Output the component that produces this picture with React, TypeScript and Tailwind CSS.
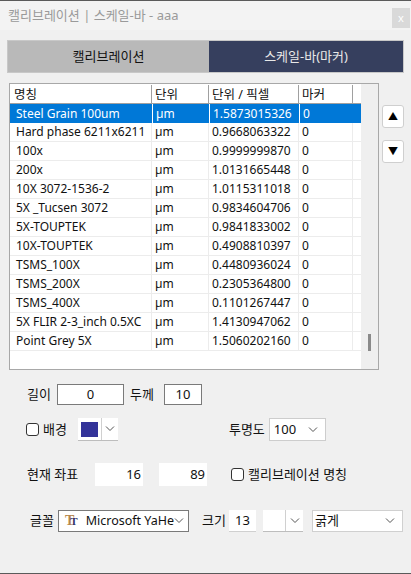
import React from 'react';

const rows = [
  ['Steel Grain 100um', 'µm', '1.5873015326', '0'],
  ['Hard phase 6211x6211', 'µm', '0.9668063322', '0'],
  ['100x', 'µm', '0.9999999870', '0'],
  ['200x', 'µm', '1.0131665448', '0'],
  ['10X 3072-1536-2', 'µm', '1.0115311018', '0'],
  ['5X _Tucsen 3072', 'µm', '0.9834604706', '0'],
  ['5X-TOUPTEK', 'µm', '0.9841833002', '0'],
  ['10X-TOUPTEK', 'µm', '0.4908810397', '0'],
  ['TSMS_100X', 'µm', '0.4480936024', '0'],
  ['TSMS_200X', 'µm', '0.2305364800', '0'],
  ['TSMS_400X', 'µm', '0.1101267447', '0'],
  ['5X FLIR 2-3_inch 0.5XC', 'µm', '1.4130947062', '0'],
  ['Point Grey 5X', 'µm', '1.5060202160', '0'],
];

const Chevron = () => (
  <svg width="10" height="6" viewBox="0 0 10 6" fill="none" stroke="#555" strokeWidth="1">
    <path d="M1 0.5 L5 4.5 L9 0.5" />
  </svg>
);

const CheckBox = () => (
  <span className="w-[13px] h-[13px] rounded-[3px] border border-[#333] bg-white inline-block" />
);

export default function App() {
  return (
    <div
      className="w-[411px] h-[574px] bg-[#f0f0f0] border-t border-b border-[#5a5a5a] flex flex-col text-[12px] text-[#111]"
      style={{ fontFamily: '"Noto Sans", "Noto Sans CJK KR", sans-serif' }}
    >
      {/* title bar */}
      <div className="h-[29px] bg-[#f3f3f3] flex items-start">
        <div className="pl-[8px] pt-[5px] text-[13px] text-[#9a9a9a]">캘리브레이션 | 스케일-바 - aaa</div>
        <div className="ml-auto mt-[7px] mr-[1px] w-[18px] h-[20px] bg-[#d9d9d9] flex items-center justify-center text-[11px] text-white">
          x
        </div>
      </div>

      {/* tabs */}
      <div className="mt-[10px] mx-[7px] h-[33px] flex border border-[#c8c8c8] text-[13px]">
        <div className="w-[201px] bg-[#b9b9b9] flex items-center justify-center text-[#111]">캘리브레이션</div>
        <div className="flex-1 bg-[#363f5e] flex items-center justify-center text-[#e8e8e8]">스케일-바(마커)</div>
      </div>

      {/* table + arrows */}
      <div className="mt-[10px] flex">
        <div className="ml-[9px] w-[370px] h-[287px] border border-[#a8a8a8] bg-white flex">
          <div className="w-[351px] pt-[1px]">
            <div className="grid grid-cols-[142px_57px_90px_54px] h-[19px] border-b border-[#a0a0a0] text-[12.5px]">
              <div className="pl-[4px] border-r border-[#a0a0a0] leading-[19px]">명칭</div>
              <div className="pl-[3px] border-r border-[#a0a0a0] leading-[19px]">단위</div>
              <div className="pl-[3px] border-r border-[#a0a0a0] leading-[19px]">단위 / 픽셀</div>
              <div className="pl-[3px] border-r border-[#a0a0a0] leading-[19px]">마커</div>
            </div>
            {rows.map((r, i) => {
              const sel = i === 0;
              return (
                <div
                  key={i}
                  className={
                    sel
                      ? 'grid grid-cols-[142px_57px_90px_54px] h-[19px] bg-[#0078d7] text-white'
                      : 'grid grid-cols-[142px_57px_90px_54px] h-[19px] border-b border-[#ececec]'
                  }
                >
                  <div className={sel ? 'pl-[6px] leading-[19px] whitespace-nowrap' : 'pl-[6px] leading-[18px] border-r border-[#ececec] whitespace-nowrap'}>{r[0]}</div>
                  <div className={sel ? 'pl-[3px] leading-[19px] border-l border-white' : 'pl-[3px] leading-[18px] border-r border-[#ececec]'}>{r[1]}</div>
                  <div className={sel ? 'pl-[3px] leading-[19px] border-l border-white' : 'pl-[3px] leading-[18px] border-r border-[#ececec]'}>{r[2]}</div>
                  <div className={sel ? 'pl-[3px] leading-[19px] border-l border-white' : 'pl-[3px] leading-[18px] border-r border-[#ececec]'}>{r[3]}</div>
                </div>
              );
            })}
          </div>
          <div className="ml-auto w-[17px] h-full bg-[#efefef] flex flex-col items-center justify-end pb-[18px]">
            <div className="w-[3px] h-[17px] bg-[#8a8a8a]" />
          </div>
        </div>
        <div className="ml-[3px] pt-[22px] flex flex-col gap-[12px]">
          <div className="w-[22px] h-[23px] rounded-[3px] border border-[#cfcfcf] bg-white flex items-center justify-center text-[10px] text-black">▲</div>
          <div className="w-[22px] h-[23px] rounded-[3px] border border-[#cfcfcf] bg-white flex items-center justify-center text-[10px] text-black">▼</div>
        </div>
      </div>

      {/* 길이 / 두께 */}
      <div className="mt-[14px] flex items-center h-[21px] text-[13px]">
        <span className="ml-[27px] w-[30px]">길이</span>
        <div className="w-[67px] h-[21px] border border-[#7a7a7a] bg-white flex items-center justify-center">0</div>
        <span className="ml-[6px] w-[34px]">두께</span>
        <div className="w-[38px] h-[21px] border border-[#7a7a7a] bg-white flex items-center justify-center">10</div>
      </div>

      {/* 배경 / 투명도 */}
      <div className="mt-[13px] flex items-center h-[23px] text-[13px]">
        <span className="ml-[26px] flex items-center gap-[4px]">
          <CheckBox />
          <span>배경</span>
        </span>
        <div className="ml-[11px] w-[40px] h-[23px] bg-white border-b border-[#bdbdbd] flex items-center">
          <div className="ml-[3px] w-[17px] h-[15px] bg-[#333399]" />
          <div className="ml-[3px] h-full border-l border-[#d0d0d0] flex-1 flex items-center justify-center">
            <Chevron />
          </div>
        </div>
        <span className="ml-[111px]">투명도</span>
        <div className="ml-[4px] w-[57px] h-[23px] bg-white border border-[#cdcdcd] flex items-center pl-[4px] pr-[7px]">
          <span>100</span>
          <span className="ml-auto">
            <Chevron />
          </span>
        </div>
      </div>

      {/* 현재 좌표 */}
      <div className="mt-[22px] flex items-center h-[23px] text-[13px]">
        <span className="ml-[27px] w-[68px]">현재 좌표</span>
        <div className="w-[48px] h-[23px] bg-white flex items-center justify-end pr-[2px]">16</div>
        <div className="ml-[16px] w-[48px] h-[23px] bg-white flex items-center justify-end pr-[2px]">89</div>
        <span className="ml-[24px] flex items-center gap-[4px]">
          <CheckBox />
          <span>캘리브레이션 명칭</span>
        </span>
      </div>

      {/* 글꼴 */}
      <div className="mt-[24px] flex items-center h-[22px] text-[13px]">
        <span className="ml-[30px] w-[28px]">글꼴</span>
        <div className="w-[131px] h-[22px] bg-white border border-[#7a7a7a] flex items-center pr-[6px]">
          <span
            className="ml-[6px] w-[16px] font-bold leading-none whitespace-nowrap"
            style={{ fontFamily: '"Liberation Serif", serif' }}
          >
            <span className="text-[14px] text-[#b5874f]">T</span>
            <span className="ml-[-4px] text-[11px] text-[#333366]">T</span>
          </span>
          <span className="ml-[8px] whitespace-nowrap text-[12.5px]">Microsoft YaHe</span>
          <span className="ml-auto">
            <Chevron />
          </span>
        </div>
        <span className="ml-[13px] w-[27px]">크기</span>
        <div className="w-[27px] h-[22px] bg-white border-b border-[#d0d0d0] flex items-center justify-center">13</div>
        <div className="ml-[7px] w-[40px] h-[22px] bg-white border-b border-[#bdbdbd] flex">
          <div className="w-[22px]" />
          <div className="flex-1 border-l border-[#d0d0d0] flex items-center justify-center">
            <Chevron />
          </div>
        </div>
        <div className="ml-[9px] w-[91px] h-[22px] bg-white border border-[#d0d0d0] flex items-center pl-[2px] pr-[7px]">
          <span>굵게</span>
          <span className="ml-auto">
            <Chevron />
          </span>
        </div>
      </div>
    </div>
  );
}
